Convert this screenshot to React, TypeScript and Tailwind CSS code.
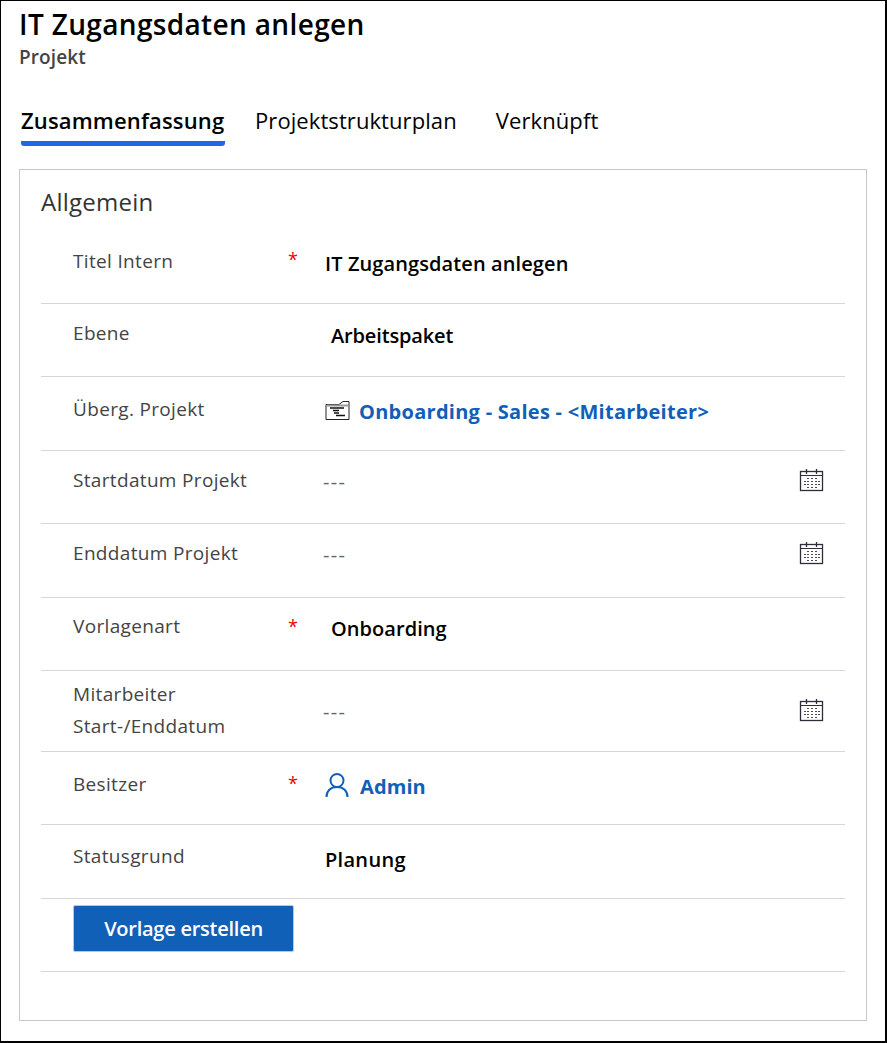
const font = "[font-family:'Open_Sans','Noto_Sans',sans-serif]";

function CalendarIcon() {
  return (
    <svg width="26" height="26" viewBox="0 0 26 26" fill="none" className="block">
      <rect x="2.500" y="4.500" width="22" height="19" stroke="#2e2d3a" strokeWidth="1.300" />
      <path d="M2.500 8.500h22" stroke="#2e2d3a" />
      <path d="M8.500 2v5M18.500 2v5" stroke="#2e2d3a" strokeWidth="1.300" />
      <path d="M9 11.500h2M13 11.500h2M17 11.500h2M6 14.500h2M9 14.500h2M13 14.500h2M17 14.500h2M20 14.500h2M6 17.500h2M9 17.500h2M13 17.500h2M17 17.500h2M20 17.500h2M9 20.500h2M13 20.500h2M17 20.500h2" stroke="#4a4a58" />
    </svg>
  );
}

function ProjectIcon() {
  return (
    <svg width="25" height="21" viewBox="0 0 25 21" fill="none" className="block">
      <path d="M1 4.500H14L18 1.500H24V19.500H1Z" fill="white" stroke="#222" />
      <path d="M2 5.500h21" stroke="#999" strokeWidth="2" />
      <path d="M5 8h14M8 10.500h6M9 13h5M11 15.500h9" stroke="#111" strokeWidth="1.400" />
    </svg>
  );
}

function PersonIcon() {
  return (
    <svg width="24" height="26" viewBox="0 0 24 26" fill="none" className="block">
      <circle cx="12" cy="8.500" r="6.500" stroke="#1160b7" strokeWidth="2" />
      <path d="M1.500 25c0-6 4-10 10.500-10s10.500 4 10.500 10" stroke="#1160b7" strokeWidth="2" />
    </svg>
  );
}

function Label({ children, star, pt }: { children: React.ReactNode; star?: string; pt: string }) {
  return (
    <div className={`w-[252px] shrink-0 pl-8 relative text-[19px] leading-[32px] text-[#444] tracking-[0.33px] ${pt}`}>
      {children}
      {star && <span className={`absolute left-[247px] text-[#f00000] text-[18px] ${star}`}>*</span>}
    </div>
  );
}

function Row({ h, children }: { h: string; children: React.ReactNode }) {
  return <div className={`flex border-b border-[#d6d6d6] ${h}`}>{children}</div>;
}

function Value({ children, pl, track }: { children: React.ReactNode; pl: string; track: string }) {
  return <div className={`${pl} ${track} text-[20px] font-semibold text-black leading-[30px] whitespace-nowrap`}>{children}</div>;
}

function DateValue({ pt }: { pt: string }) {
  return (
    <div className="flex-1 flex items-start justify-between pl-[30px] pr-[21px]">
      <span className={`text-[20px] leading-[30px] text-[#666] tracking-[1.3px] ${pt}`}>---</span>
      <span className={pt}><CalendarIcon /></span>
    </div>
  );
}

export default function App() {
  return (
    <div className={`w-[887px] h-[1043px] bg-white border border-black border-b-2 border-r-2 pl-[18px] pr-[18px] flex flex-col ${font}`}>
      <h1 className="text-[28px] leading-[36px] font-semibold text-black mt-[5px] tracking-[0.35px] whitespace-nowrap">IT Zugangsdaten anlegen</h1>
      <div className="text-[19px] leading-[26px] font-semibold text-[#444] mt-[2px] tracking-[0.1px]">Projekt</div>

      <div className="flex mt-[28px] pl-[2px] text-[22px] leading-[34px] text-black tracking-[0.08px]">
        <div className="w-[204px] border-b-[5px] border-[#2266e3] rounded-b-[3px] h-[48px] pt-[5px] font-semibold tracking-[0.15px] whitespace-nowrap">Zusammenfassung</div>
        <div className="ml-[30px] pt-[5px] whitespace-nowrap">Projektstrukturplan</div>
        <div className="ml-[39px] pt-[5px] whitespace-nowrap tracking-[0.1px]">Verknüpft</div>
      </div>

      <div className="mt-[23px] w-[848px] h-[852px] border border-[#c8c8c8] pl-[21px] pr-[21px]">
        <div className="text-[24px] leading-[32px] text-[#333] mt-[16px] tracking-[0.25px]">Allgemein</div>
        <div className="flex flex-col mt-[10px]">
          <Row h="h-[76px]">
            <Label star="top-[15px]" pt="pt-[17px]">Titel Intern</Label>
            <div className="pt-[21px]"><Value pl="pl-[32px]" track="tracking-[0.1px]">IT Zugangsdaten anlegen</Value></div>
          </Row>
          <Row h="h-[73px]">
            <Label pt="pt-[13px]">Ebene</Label>
            <div className="pt-[17px]"><Value pl="pl-[38px]" track="tracking-[-0.15px]">Arbeitspaket</Value></div>
          </Row>
          <Row h="h-[74px]">
            <Label pt="pt-[16px]">Überg. Projekt</Label>
            <div className="pt-[23px] pl-[32px] flex items-start gap-[9px]">
              <ProjectIcon />
              <span className="text-[20px] font-bold text-[#1160b7] leading-[30px] -mt-[3px] tracking-[0.27px] whitespace-nowrap">Onboarding - Sales - &lt;Mitarbeiter&gt;</span>
            </div>
          </Row>
          <Row h="h-[73px]">
            <Label pt="pt-[13px]">Startdatum Projekt</Label>
            <DateValue pt="pt-[16px]" />
          </Row>
          <Row h="h-[74px]">
            <Label pt="pt-[13px]">Enddatum Projekt</Label>
            <DateValue pt="pt-[16px]" />
          </Row>
          <Row h="h-[73px]">
            <Label star="top-[12px]" pt="pt-[12px]">Vorlagenart</Label>
            <div className="pt-[16px]"><Value pl="pl-[38px]" track="tracking-[0.05px]">Onboarding</Value></div>
          </Row>
          <Row h="h-[81px]">
            <Label pt="pt-[7px]">Mitarbeiter<br />Start-/Enddatum</Label>
            <DateValue pt="pt-[26px]" />
          </Row>
          <Row h="h-[73px]">
            <Label star="top-[15px]" pt="pt-[16px]">Besitzer</Label>
            <div className="pt-[20px] pl-[32px] flex items-start gap-[11px]">
              <PersonIcon />
              <span className="text-[20px] font-bold text-[#1160b7] leading-[30px] tracking-[0.1px]">Admin</span>
            </div>
          </Row>
          <Row h="h-[74px]">
            <Label pt="pt-[15px]">Statusgrund</Label>
            <div className="pt-[20px]"><Value pl="pl-[32px]" track="tracking-[0.3px]">Planung</Value></div>
          </Row>
          <Row h="h-[73px]">
            <div className="pl-8 pt-[6px]">
              <button className="w-[221px] h-[47px] bg-[#1160b7] border border-[#b8c8dc] rounded-[2px] text-white text-[20px] font-semibold tracking-[-0.25px]">Vorlage erstellen</button>
            </div>
          </Row>
        </div>
      </div>
    </div>
  );
}
